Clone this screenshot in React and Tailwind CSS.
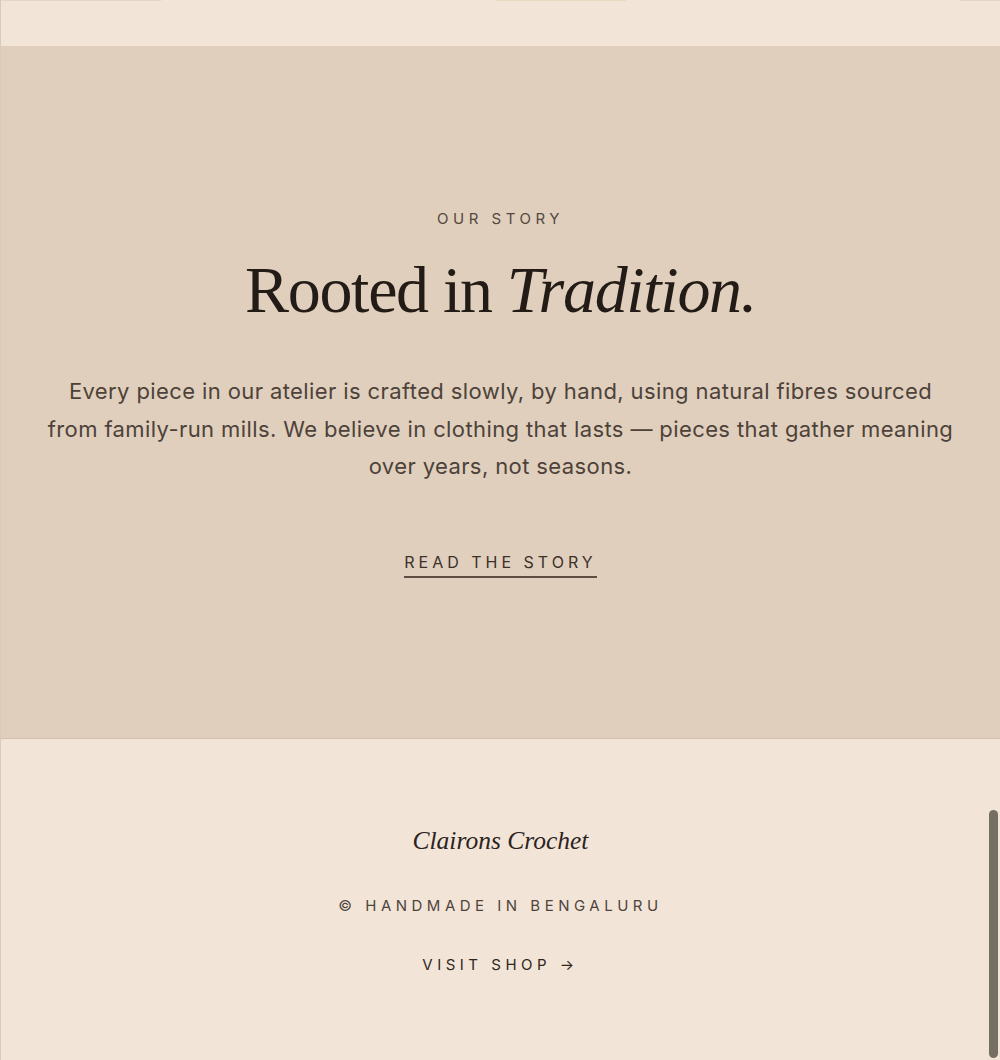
import React from 'react'

const serif = { fontFamily: '"Liberation Serif", "DejaVu Serif", serif' }
const sans = { fontFamily: 'Inter, "Liberation Sans", sans-serif' }

function StorySection() {
  return (
    <section className="bg-[#e0cfbc] border-b border-[#d3c1ad] h-[693px] flex flex-col items-center pt-[165px]">
      <p style={sans} className="text-[15px] tracking-[0.3em] text-[#554840] leading-none">
        OUR STORY
      </p>
      <h2 style={serif} className="mt-[31px] text-[66px] leading-none tracking-[-0.02em] text-[#231b16]">
        Rooted in <em>Tradition.</em>
      </h2>
      <p
        style={sans}
        className="mt-[50px] max-w-[916px] text-center text-[22px] tracking-[0.018em] leading-[37.5px] text-[#4d423a]"
      >
        Every piece in our atelier is crafted slowly, by hand, using natural fibres sourced from family-run mills. We
        believe in clothing that lasts — pieces that gather meaning over years, not seasons.
      </p>
      <a
        href="#story"
        style={sans}
        className="mt-[68px] text-[16px] tracking-[0.25em] text-[#3b302a] pb-[6px] border-b-2 border-[#5e4e42] leading-none"
      >
        READ THE STORY
      </a>
    </section>
  )
}

function Footer() {
  return (
    <footer className="bg-[#f2e5d8] h-[321px] flex flex-col items-center pt-[89px]">
      <p style={serif} className="italic text-[25.5px] leading-none text-[#2c231e]">
        Clairons Crochet
      </p>
      <p style={sans} className="mt-[44px] text-[15px] tracking-[0.3em] text-[#4f443c] leading-none">
        © HANDMADE IN BENGALURU
      </p>
      <a href="#shop" style={sans} className="mt-[44px] text-[15px] tracking-[0.3em] text-[#2f2621] leading-none">
        VISIT SHOP →
      </a>
    </footer>
  )
}

export default function App() {
  return (
    <div className="relative min-h-[1060px] bg-[#f2e5d8] border-l border-[#d8cbbd]">
      {/* tail of the header band */}
      <div className="h-[46px] bg-[#f2e5d8] flex justify-between items-start">
        <span className="w-[160px] h-px bg-[#e4d6c6]" />
        <span className="w-[130px] h-px bg-[#e8dcc0]" />
        <span className="w-[40px] h-px bg-[#e4d6c6]" />
      </div>
      <StorySection />
      <Footer />
      {/* overlay scrollbar thumb */}
      <div className="absolute right-[2px] top-[810px] w-[9px] h-[248px] rounded-full bg-[#756e63]" />
    </div>
  )
}
